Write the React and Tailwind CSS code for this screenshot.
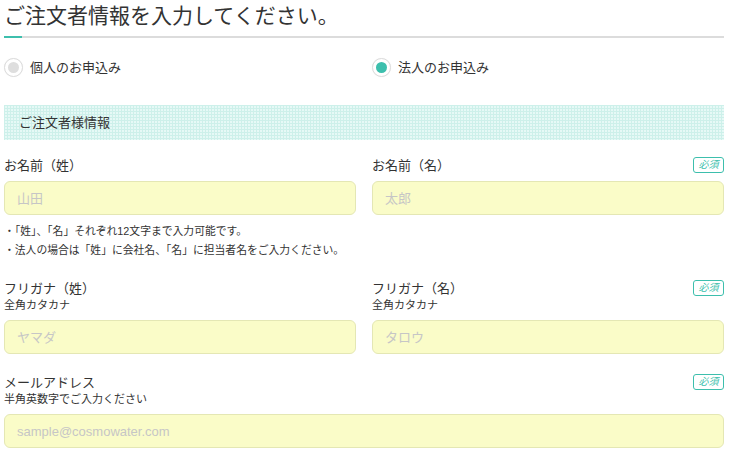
import React from "react";

function Badge() {
  return (
    <span className="flex h-[16px] w-[31px] items-center justify-center rounded-[3px] border border-[#3dbfad] text-[10px] italic leading-none text-[#3dbfad]">
      必須
    </span>
  );
}

function Field({ label, sub, placeholder, required }) {
  return (
    <div className="flex flex-col">
      <div className="flex h-[16px] items-center justify-between">
        <span className="text-[13px] leading-none text-[#333]">{label}</span>
        {required ? <Badge /> : null}
      </div>
      {sub ? (
        <div className="mt-[2px] h-[14px] text-[11px] leading-[14px] text-[#333]">{sub}</div>
      ) : null}
      <input
        className="mt-[8px] box-border h-[34px] w-full rounded-[6px] border border-[#e4e7b4] bg-[#fafcc8] px-[12px] text-[13px] outline-none placeholder:text-[#c6c6c6]"
        placeholder={placeholder}
      />
    </div>
  );
}

function Radio({ checked, label }) {
  return (
    <label className="flex items-center gap-[7px]">
      <span className="flex h-[19px] w-[19px] items-center justify-center rounded-full border border-[#dcdcdc] bg-white shadow-[0_0_1px_rgba(0,0,0,0.08)]">
        <span className={checked ? "h-[11px] w-[11px] rounded-full bg-[#3dbfad]" : "h-[11px] w-[11px] rounded-full bg-[#dedede]"} />
      </span>
      <span className="text-[13px] leading-none text-[#333]">{label}</span>
    </label>
  );
}

export default function App() {
  return (
    <div className="min-h-[464px] bg-white font-['Liberation_Sans','Noto_Sans_CJK_JP',sans-serif]">
      <div className="ml-[4px] w-[720px] pb-[14px]">
        <h1 className="h-[36px] pt-[2px] text-[21px] font-normal leading-[28px] text-[#333]">
          ご注文者情報を入力してください。
        </h1>
        <div className="flex h-[2px]">
          <div className="w-[18px] bg-[#3dbfad]" />
          <div className="flex-1 bg-[#dcdcdc]" />
        </div>
        <div className="mt-[20px] grid grid-cols-2 gap-4">
          <Radio checked={false} label="個人のお申込み" />
          <Radio checked={true} label="法人のお申込み" />
        </div>
        <div className="mt-[28px] flex h-[35px] items-center bg-[#e6f9f6] bg-[image:linear-gradient(#cdf0ea_1px,transparent_1px),linear-gradient(90deg,#cdf0ea_1px,transparent_1px)] bg-[size:3px_3px] px-[15px] text-[13px] text-[#333]">
          ご注文者様情報
        </div>
        <div className="mt-[17px] grid grid-cols-2 gap-4">
          <Field label="お名前（姓）" placeholder="山田" />
          <Field label="お名前（名）" placeholder="太郎" required />
        </div>
        <div className="mt-[7px] text-[10.8px] leading-[19px] text-[#333]">
          <p>・「姓」、「名」それぞれ12文字まで入力可能です。</p>
          <p>・法人の場合は「姓」に会社名、「名」に担当者名をご入力ください。</p>
        </div>
        <div className="mt-[20px] grid grid-cols-2 gap-4">
          <Field label="フリガナ（姓）" sub="全角カタカナ" placeholder="ヤマダ" />
          <Field label="フリガナ（名）" sub="全角カタカナ" placeholder="タロウ" required />
        </div>
        <div className="mt-[20px]">
          <Field label="メールアドレス" sub="半角英数字でご入力ください" placeholder="sample@cosmowater.com" required />
        </div>
      </div>
    </div>
  );
}
